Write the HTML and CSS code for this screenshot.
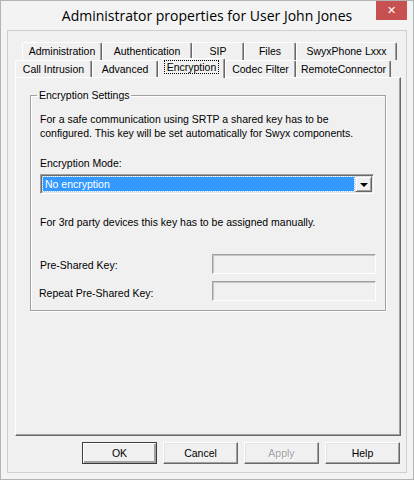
FILE: index.html
```html
<!DOCTYPE html>
<html>
  <head>
    <meta charset="UTF-8" />
    <title>Administrator properties for User John Jones</title>
    <link rel="stylesheet" href="styles.css">
  </head>

  <body>
    <div class="window">
      <div class="titlebar">
        <div class="title">Administrator properties for User John Jones</div>
        <div class="close">&#x2715;</div>
      </div>

      <div class="client">
        <div class="tabs">
          <div class="tabrow top">
            <div class="tab w-admin">Administration</div>
            <div class="tab w-auth">Authentication</div>
            <div class="tab w-sip">SIP</div>
            <div class="tab w-files">Files</div>
            <div class="tab w-phone">SwyxPhone Lxxx</div>
          </div>
          <div class="tabrow bottom">
            <div class="tab w-call">Call Intrusion</div>
            <div class="tab w-adv">Advanced</div>
            <div class="tab w-enc selected"><span class="focus">Encryption</span></div>
            <div class="tab w-codec">Codec Filter</div>
            <div class="tab w-remote">RemoteConnector</div>
          </div>

          <div class="pane">
            <fieldset class="group">
              <legend>Encryption Settings</legend>
              <p class="intro">For a safe communication using SRTP a shared key has to be<br>
                configured. This key will be set automatically for Swyx components.</p>

              <div class="modelabel">Encryption Mode:</div>
              <div class="combo">
                <div class="combo-value">No encryption</div>
                <div class="combo-btn"><span class="arrow"></span></div>
              </div>

              <p class="manual">For 3rd party devices this key has to be assigned manually.</p>

              <div class="keyrow">
                <label for="psk">Pre-Shared Key:</label>
                <input type="text" id="psk" disabled />
              </div>
              <div class="keyrow">
                <label for="psk2" class="repeat">Repeat Pre-Shared Key:</label>
                <input type="text" id="psk2" disabled />
              </div>
            </fieldset>
          </div>
        </div>

        <div class="buttons">
          <button class="default">OK</button>
          <button>Cancel</button>
          <button class="disabled">Apply</button>
          <button>Help</button>
        </div>
      </div>
    </div>
  </body>
</html>
```

FILE: styles.css
```css
html,
body {
  margin: 0;
  padding: 0;
}

body {
  font: 10.5px "Liberation Sans", Arial, sans-serif;
  color: #000;
  background: #f3f3f3;
}

.window {
  width: 414px;
  height: 480px;
  box-sizing: border-box;
  border: 1px solid #b4b4b4;
  background: #f3f3f3;
  display: flex;
  flex-direction: column;
}

/* title bar */

.titlebar {
  height: 29px;
  display: flex;
  align-items: flex-start;
  padding: 0 6px 0 37px;
}

.title {
  flex: 1;
  text-align: center;
  font: 14px "Open Sans", "Noto Sans", sans-serif;
  line-height: 30px;
  color: #000;
}

.close {
  width: 31px;
  height: 19px;
  background: #c75050;
  color: #fff;
  font: bold 11px "DejaVu Sans", sans-serif;
  text-align: center;
  line-height: 19px;
}

/* client area */

.client {
  flex: 1;
  margin: 0 6px 6px 6px;
  border: 1px solid #cfcfcf;
  background: #f0f0f0;
  display: flex;
  flex-direction: column;
}

.tabs {
  padding: 11px 5px 0 7px;
}

.tabrow {
  display: flex;
}

.tabrow.top {
  height: 18px;
  padding-left: 7px;
}

.tabrow.bottom {
  height: 17px;
}

.tab {
  box-sizing: border-box;
  height: 100%;
  border-top: 1px solid #fff;
  border-left: 1px solid #fff;
  border-right: 1px solid #696969;
  box-shadow: inset -1px 0 #a0a0a0;
  border-radius: 2px 2px 0 0;
  text-align: center;
  line-height: 16px;
  white-space: nowrap;
  background: #f0f0f0;
}

.w-admin { width: 80px; }
.w-auth { width: 90px; }
.w-sip { width: 52px; }
.w-files { width: 52px; }
.w-phone { width: 101px; }
.w-call { width: 77px; }
.w-adv { width: 66px; }
.w-enc { width: 67px; }
.w-codec { width: 71px; }
.w-remote { width: 95px; }

.tab.selected {
  position: relative;
  z-index: 1;
  height: 20px;
  margin-top: -2px;
  line-height: 17px;
}

.focus {
  outline: 1px dotted #000;
  padding: 0 2px;
}

/* page of the tab control */

.pane {
  box-sizing: border-box;
  height: 359px;
  border: 1px solid;
  border-color: #fff #696969 #696969 #fff;
  box-shadow: inset -1px -1px #a0a0a0;
  padding: 11px 14px 0 14px;
}

.group {
  margin: 0;
  width: 356px;
  box-sizing: border-box;
  border: 1px solid #a0a0a0;
  box-shadow: 1px 1px #fff, inset 1px 1px #fff;
  padding: 0 9px 9px 9px;
}

.group legend {
  padding: 0 2px;
  margin-left: -3px;
  line-height: 13px;
}

.intro {
  margin: 10px 0 0 0;
  line-height: 14px;
}

.modelabel {
  margin-top: 17px;
  line-height: 13px;
}

.combo {
  margin-top: 4px;
  width: 334px;
  height: 20px;
  box-sizing: border-box;
  border: 1px solid;
  border-color: #a0a0a0 #fff #fff #a0a0a0;
  box-shadow: inset 1px 1px #696969, inset -1px -1px #e3e3e3;
  background: #fff;
  display: flex;
  padding: 2px;
}

.combo-value {
  flex: 1;
  background: #3399ff;
  color: #fff;
  line-height: 14px;
  padding-left: 2px;
  outline: 1px dotted #9cccff;
}

.combo-btn {
  width: 17px;
  margin: -1px -1px -1px 1px;
  box-sizing: border-box;
  background: #f0f0f0;
  border: 1px solid;
  border-color: #e3e3e3 #696969 #696969 #e3e3e3;
  box-shadow: inset 1px 1px #fff, inset -1px -1px #a0a0a0;
  display: flex;
  align-items: center;
  justify-content: center;
}

.arrow {
  width: 0;
  height: 0;
  border-left: 4px solid transparent;
  border-right: 4px solid transparent;
  border-top: 4px solid #000;
  margin-top: 1px;
}

.manual {
  margin: 22px 0 0 0;
  line-height: 13px;
}

.keyrow {
  display: grid;
  grid-template-columns: 172px 164px;
  align-items: center;
  height: 20px;
  margin-top: 25px;
}

.keyrow + .keyrow {
  margin-top: 7px;
}

.keyrow label {
  padding-top: 1px;
}

.keyrow label.repeat {
  margin-left: -1px;
  padding-top: 3px;
}

.keyrow input {
  font: 11px "Liberation Sans", Arial, sans-serif;
  height: 20px;
  width: 164px;
  box-sizing: border-box;
  margin: 0;
  border: 1px solid;
  border-color: #a0a0a0 #fff #fff #a0a0a0;
  box-shadow: inset 1px 1px #c4c4c4;
  background: #f0f0f0;
}

/* dialog buttons */

.buttons {
  display: flex;
  justify-content: flex-end;
  gap: 6px;
  padding: 6px 6px 0 0;
}

.buttons button {
  font: 10.5px "Liberation Sans", Arial, sans-serif;
  width: 75px;
  height: 22px;
  box-sizing: border-box;
  margin: 0;
  padding: 0;
  background: #f0f0f0;
  border: 1px solid;
  border-color: #fff #696969 #696969 #fff;
  box-shadow: inset -1px -1px #a0a0a0, inset 1px 1px #e3e3e3;
  color: #000;
}

.buttons button.default {
  border: 1px solid #3c3c3c;
  box-shadow: inset 1px 1px #fff, inset -2px -2px #a0a0a0;
}

.buttons button.disabled {
  color: #a0a0a0;
  text-shadow: 1px 1px #fff;
}
```
